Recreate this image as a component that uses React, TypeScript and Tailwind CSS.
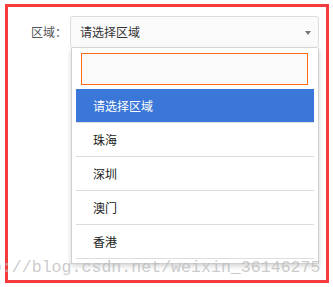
export default function App() {
  const options = ['请选择区域', '珠海', '深圳', '澳门', '香港'];

  return (
    <div className="relative w-[333px] h-[287px] bg-white overflow-hidden font-['Noto_Sans_CJK_SC',sans-serif] text-[12px]">
      {/* hand-drawn red frame */}
      <div className="mt-[4px] ml-[5px] w-[324px] h-[279px] border-[3px] border-[#f43c3c]">
        <div className="flex pt-[9px] pl-[23px]">
          <label className="w-[39px] h-[31px] leading-[31px] text-[#555]">区域：</label>
          <div className="w-[249px]">
            <div className="flex items-center justify-between h-[32px] pl-[9px] pr-[7px] border border-[#dcdcdc] rounded-[3px] bg-[#fafafa] text-[#333]">
              <span>请选择区域</span>
              <span className="w-0 h-0 border-l-[3px] border-r-[3px] border-t-[4px] border-l-transparent border-r-transparent border-t-[#777] mt-[1px]" />
            </div>
            <div className="ml-[1px] w-[248px] pt-[5px] pb-[4px] px-[4px] border-x border-b border-[#d0d0d0] bg-white shadow-[0_2px_5px_rgba(0,0,0,0.18)]">
              <div className="px-[5px] pr-[6px]">
                <div className="h-[32px] border border-[#ff6a13] bg-[#fafafa]" />
              </div>
              <ul className="mt-[4px]">
                {options.map((o, i) => (
                  <li
                    key={o}
                    className={`h-[34px] leading-[33px] pl-[17px] border-b border-[#dddddd] ${i === 0 ? 'bg-[#3a77d8] text-white' : 'text-[#222]'}`}
                  >
                    {o}
                  </li>
                ))}
              </ul>
            </div>
          </div>
        </div>
      </div>

      {/* blog watermark */}
      <div className="absolute left-[-38px] top-[256px] whitespace-nowrap font-['Liberation_Mono',monospace] text-[16.6px] text-[#bdbdbd]/80 pointer-events-none">
        http://blog.csdn.net/weixin_36146275
      </div>
    </div>
  );
}
